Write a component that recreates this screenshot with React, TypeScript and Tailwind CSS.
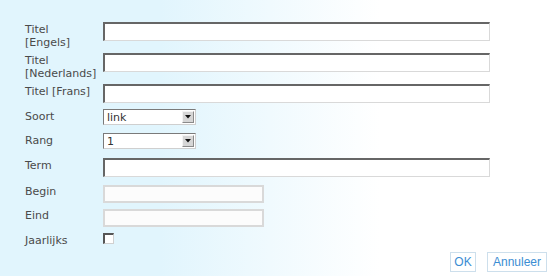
import type React from "react";

type Row = {
  label: string;
  kind: "text" | "select" | "date" | "check";
  height: string;
  value?: string;
};

const rows: Row[] = [
  { label: "Titel\n[Engels]", kind: "text", height: "h-[31px]" },
  { label: "Titel\n[Nederlands]", kind: "text", height: "h-[31px]" },
  { label: "Titel [Frans]", kind: "text", height: "h-[25px]" },
  { label: "Soort", kind: "select", height: "h-[24px]", value: "link" },
  { label: "Rang", kind: "select", height: "h-[25px]", value: "1" },
  { label: "Term", kind: "text", height: "h-[26px]" },
  { label: "Begin", kind: "date", height: "h-[24px]" },
  { label: "Eind", kind: "date", height: "h-[25px]" },
  { label: "Jaarlijks", kind: "check", height: "h-[15px]" },
];

const Field: React.FC<{ row: Row }> = ({ row }) => {
  if (row.kind === "text") {
    return (
      <div className="h-[19px] w-[387px] bg-white border-t-2 border-l-2 border-r border-b border-t-[#666666] border-l-[#666666] border-r-[#d9d9d9] border-b-[#d9d9d9]" />
    );
  }
  if (row.kind === "date") {
    return <div className="mt-[1px] h-[18px] w-[161px] bg-[#fcfcfc] border-2 border-[#d9d9d9]" />;
  }
  if (row.kind === "check") {
    return (
      <div className="h-[11px] w-[11px] bg-white border-t-2 border-l-2 border-r border-b border-t-[#555555] border-l-[#555555] border-r-[#d0d0d0] border-b-[#d0d0d0]" />
    );
  }
  return (
    <div className="flex h-[16px] w-[93px] items-center bg-white border border-t-[#7a7a7a] border-l-[#7a7a7a] border-r-[#cfcfcf] border-b-[#cfcfcf]">
      <span className="flex-1 pl-[3px] text-[11px] leading-[13px] text-[#333333]">{row.value}</span>
      <span className="mr-[1px] flex h-[12px] w-[12px] items-center justify-center bg-[#d6d6d6] border border-t-[#f4f4f4] border-l-[#f4f4f4] border-r-[#8a8a8a] border-b-[#8a8a8a]">
        <svg width="6" height="4" viewBox="0 0 6 4">
          <path d="M0 0h6L3 3.5z" fill="#111111" />
        </svg>
      </span>
    </div>
  );
};

export default function App() {
  return (
    <div className="h-[276px] w-[553px] overflow-hidden bg-[linear-gradient(to_right,#e1f5fd_0px,#e1f5fd_160px,#ffffff_380px)] pt-[22px] pl-[25px] font-['DejaVu_Sans',sans-serif]">
      <div className="flex flex-col">
        {rows.map((row) => (
          <div key={row.label} className={`flex items-start ${row.height}`}>
            <label className="w-[78px] whitespace-pre-line pt-[1px] text-[11px] leading-[13px] text-[#4a4a4a]">
              {row.label}
            </label>
            <Field row={row} />
          </div>
        ))}
      </div>

      <div className="mt-[4px] flex justify-end gap-[11px] pr-[6px] font-['Liberation_Sans',sans-serif]">
        <button className="h-[20px] w-[26px] border border-[#cddfec] bg-white text-[12px] leading-[18px] text-[#3b8dd3]">
          OK
        </button>
        <button className="h-[20px] w-[60px] border border-[#cddfec] bg-white text-[12px] leading-[18px] text-[#3b8dd3]">
          Annuleer
        </button>
      </div>
    </div>
  );
}
